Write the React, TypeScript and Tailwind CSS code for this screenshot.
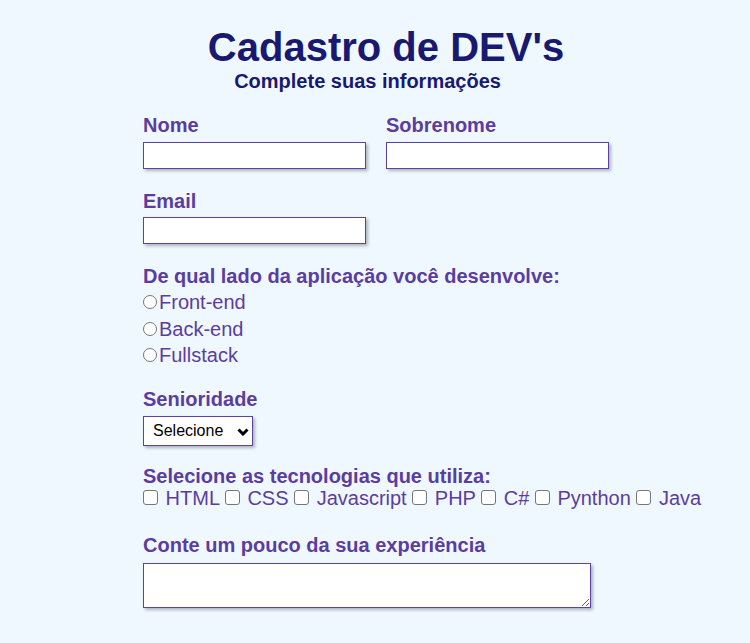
import React from "react";

const labelCls = "block text-[20px] leading-[23px] font-bold text-[#5b3d9f]";
const boxCls =
  "block bg-white border border-[#5a42a8] shadow-[2px_2px_3px_rgba(0,0,0,0.28)] outline-none";
const radioCls =
  "appearance-none inline-block align-[0px] m-0 mr-[2px] w-[14px] h-[14px] rounded-full border border-[#767676] bg-white";
const checkCls =
  "appearance-none inline-block align-[0px] m-0 mr-[2px] w-[15px] h-[15px] rounded-[3px] border border-[#767676] bg-white";

export default function App() {
  const techs = ["HTML", "CSS", "Javascript", "PHP", "C#", "Pynthon", "Java"];

  return (
    <div className="min-h-screen bg-[#f0f8ff] font-['Liberation_Sans',Arial,sans-serif]">
      <h1 className="pt-[24px] pl-[22px] text-center text-[40px] leading-[46px] font-bold text-[#191970]">
        Cadastro de DEV's
      </h1>
      <h3 className="pr-[15px] text-center text-[20px] leading-[23px] font-bold text-[#191970]">
        Complete suas informações
      </h3>

      <form className="pl-[143px] pt-[21px]">
        <div className="flex gap-[20px]">
          <div>
            <label className={labelCls}>Nome</label>
            <input type="text" className={`${boxCls} w-[223px] h-[27px] mt-[5px]`} />
          </div>
          <div>
            <label className={labelCls}>Sobrenome</label>
            <input type="text" className={`${boxCls} w-[223px] h-[27px] mt-[5px]`} />
          </div>
        </div>

        <div className="mt-[21px]">
          <label className={labelCls}>Email</label>
          <input type="email" className={`${boxCls} w-[223px] h-[27px] mt-[4px]`} />
        </div>

        <div className="mt-[21px]">
          <label className={labelCls}>De qual lado da aplicação você desenvolve:</label>
          <div className="mt-[1px] text-[20px] leading-[26.6px] text-[#5b3d9f]">
            {["Front-end", "Back-end", "Fullstack"].map((o) => (
              <div key={o}>
                <label>
                  <input type="radio" name="lado" className={radioCls} />
                  {o}
                </label>
              </div>
            ))}
          </div>
        </div>

        <div className="mt-[19px]">
          <label className={labelCls}>Senioridade</label>
          <div className="relative mt-[5px] w-[110px]">
            <select className={`${boxCls} appearance-none w-[110px] h-[30px] text-[16px] text-black pl-[9px] pr-[20px]`}>
              <option>Selecione</option>
              <option>Júnior</option>
              <option>Pleno</option>
              <option>Sênior</option>
            </select>
            <svg
              viewBox="0 0 12 8"
              className="absolute right-[4px] top-[12px] w-[12px] h-[8px] pointer-events-none"
            >
              <polyline points="1.5,1.5 6,6 10.5,1.5" fill="none" stroke="#000" strokeWidth="3" />
            </svg>
          </div>
        </div>

        <div className="mt-[19px]">
          <label className={labelCls}>Selecione as tecnologias que utiliza:</label>
          <div className="-mt-[1px] text-[20px] leading-[23px] text-[#5b3d9f]">
            {techs.map((t, i) => (
              <React.Fragment key={t}>
                <input type="checkbox" className={checkCls} /> {t}
                {i < techs.length - 1 ? " " : ""}
              </React.Fragment>
            ))}
          </div>
        </div>

        <div className="mt-[24px]">
          <label className={labelCls}>Conte um pouco da sua experiência</label>
          <textarea className={`${boxCls} w-[448px] h-[45px] mt-[6px]`} />
        </div>
      </form>
    </div>
  );
}
